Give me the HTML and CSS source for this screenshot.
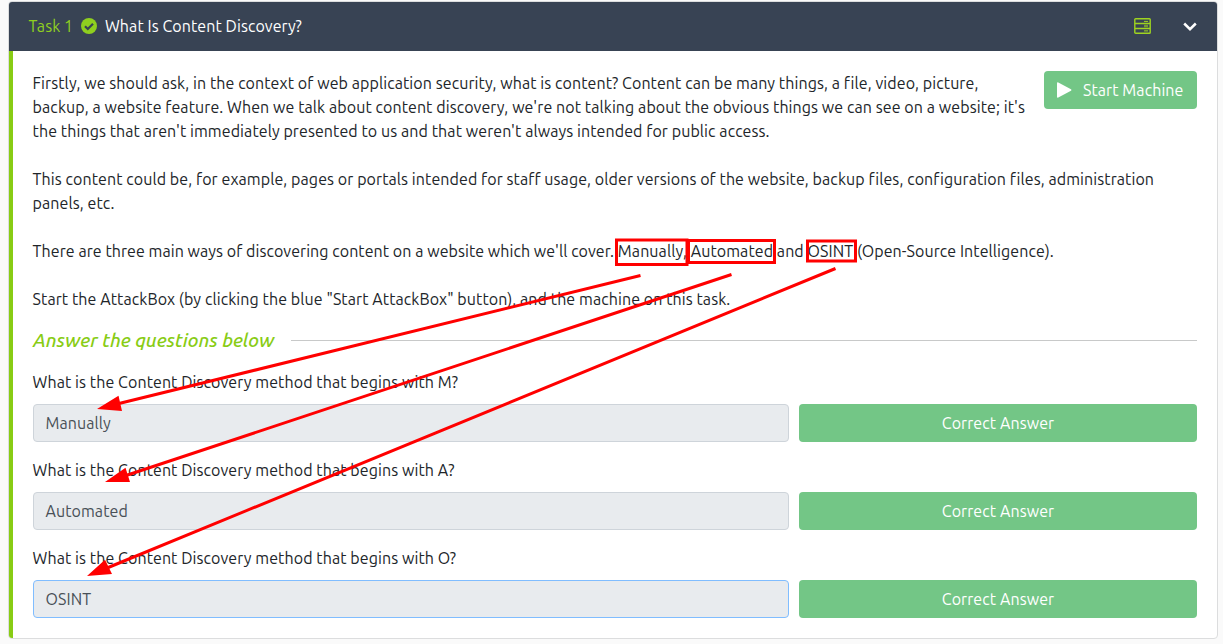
FILE: index.html
```html
<!DOCTYPE html>
<html lang="en">
<head>
<meta charset="utf-8">
<title>Content Discovery</title>
<link rel="stylesheet" href="styles.css">
</head>
<body>
<main class="card">
  <header class="card-header">
    <span class="task">Task 1</span>
    <svg class="check" viewBox="0 0 16 16"><circle cx="8" cy="8" r="8" fill="#8fcf1f"/><path d="M4 8.2l2.8 2.8L12 5.7" fill="none" stroke="#384354" stroke-width="2.2"/></svg>
    <span class="title">What Is Content Discovery?</span>
    <svg class="server" viewBox="0 0 17 16"><g fill="none" stroke="#9fd420" stroke-width="1.4"><rect x=".8" y=".8" width="15.4" height="14.4" rx=".8"/><path d="M1 5.5h15M1 10.5h15" stroke-width="1.5"/><path d="M10 3.4h4M10 12.900h4" stroke-width="1"/><path d="M10 8h4" stroke-width="2.4" opacity=".6"/></g></svg>
    <svg class="chevron" viewBox="0 0 14 9"><path d="M1.2 1.500L7 7.2l5.800-5.700" fill="none" stroke="#fff" stroke-width="2.500"/></svg>
  </header>
  <div class="card-body">
    <section class="intro">
      <button class="start"><svg class="play" viewBox="0 0 15 16"><path d="M0 1.2Q0 0 1.3.5L14 7.3q1 .7 0 1.4L1.3 15.5Q0 16 0 14.8z" fill="#fff"/></svg><span class="start-label">Start Machine</span></button>
      <p class="para"><span class="line">Firstly, we should ask, in the context of web application security, what is content? Content can be many things, a file, video, picture,</span><span class="line">backup, a website feature. When we talk about content discovery, we're not talking about the obvious things we can see on a website; it's</span><span class="line">the things that aren't immediately presented to us and that weren't always intended for public access.</span></p>
      <p class="para"><span class="line">This content could be, for example, pages or portals intended for staff usage, older versions of the website, backup files, configuration files, administration</span><span class="line">panels, etc.</span></p>
      <p class="para"><span class="line"><span class="lead">There are three main ways of discovering content on a website which we'll cover. </span>Manually, Automated and OSINT (Open-Source Intelligence).</span></p>
      <p class="para"><span class="line">Start the AttackBox (by clicking the blue "Start AttackBox" button), and the machine on this task.</span></p>
    </section>
    <div class="divider"><h2 class="heading">Answer the questions below</h2><span class="rule"></span></div>
    <section class="question">
      <label class="ask">What is the Content Discovery method that begins with M?</label>
      <div class="row"><div class="field">Manually</div><div class="correct"><span>Correct Answer</span></div></div>
    </section>
    <section class="question">
      <label class="ask">What is the Content Discovery method that begins with A?</label>
      <div class="row"><div class="field">Automated</div><div class="correct"><span>Correct Answer</span></div></div>
    </section>
    <section class="question">
      <label class="ask">What is the Content Discovery method that begins with O?</label>
      <div class="row"><div class="field focused">OSINT</div><div class="correct"><span>Correct Answer</span></div></div>
    </section>
  </div>
</main>
<svg class="annotations" viewBox="0 0 1223 644">
  <g fill="none" stroke="#f00" stroke-width="3">
    <rect x="616.5" y="240" width="70.5" height="24.5"/>
    <rect x="688.5" y="240.5" width="86" height="22"/>
    <rect x="807.5" y="241" width="48" height="20"/>
    <path d="M640.5 275.5L119 403.5M731.5 274.5L126 475.5M835.5 268.5L107 568"/>
  </g>
  <path fill="#f00" d="M97 409l21.500-13.300 3.500 15.300zM105 482l20.500-14.300 4.500 14.300zM87 576l18-16.300 7 14.300z"/>
</svg>
</body>
</html>
```
FILE: styles.css
```css
* { box-sizing: border-box; }
body {
  margin: 0;
  height: 644px;
  padding: 1px 5px 0 8px;
  overflow: hidden;
  background: #fafafa;
  color: #212529;
  font: 16px/24px Ubuntu, "Noto Sans", sans-serif;
  letter-spacing: .082px;
}
.card {
  width: 1210px;
  height: 638px;
  border: 1px solid #dcddde;
  border-radius: 4px;
  background: #fff;
  overflow: hidden;
}
.card-header {
  display: flex;
  align-items: center;
  height: 49px;
  padding: 0 20px 1px 19.5px;
  background: #384354;
  color: #fff;
  white-space: nowrap;
}
.task { width: 52.5px; color: #8fcf1f; }
.check { width: 16px; height: 16px; margin-right: 8px; }
.server { width: 17px; height: 16px; margin-left: auto; margin-right: 32px; }
.chevron { width: 14px; height: 9px; }
.card-body {
  height: 588px;
  padding: 20px 20px 0;
  border-left: 4px solid #88cc14;
}
.intro { height: 240px; }
.para { margin: 0 0 24px; }
.line { display: block; white-space: nowrap; width: max-content; text-indent: -.4px; }
.lead { letter-spacing: .06px; }
.start {
  float: right;
  display: flex;
  align-items: center;
  width: 153px;
  height: 38px;
  padding: 0 0 0 13px;
  border: 0;
  border-radius: 4px;
  background: #73c686;
  color: #fff;
  font: inherit;
  letter-spacing: inherit;
}
.play { width: 15px; height: 16px; margin-right: 11px; }
.start-label { white-space: nowrap; }
.divider { display: flex; align-items: center; height: 59px; gap: 16px; }
.heading {
  width: 242px;
  margin: 0;
  padding-bottom: 2px;
  color: #88cc14;
  font-size: 19.2px;
  font-style: italic;
  font-weight: 500;
  letter-spacing: -.02px;
  white-space: nowrap;
}
.rule { flex: 1; height: 1px; background: #c8c9c9; }
.question { height: 88px; }
.ask { display: block; height: 34px; white-space: nowrap; width: max-content; text-indent: -.4px; }
.row { display: grid; grid-template-columns: 756px 398px; gap: 10px; height: 38px; }
.field {
  padding: 6px 11.5px;
  border: 1px solid #ced4da;
  border-radius: 4px;
  background: #e8ebee;
  color: #495057;
}
.focused { border-color: #80bdff; }
.correct {
  display: flex;
  align-items: center;
  justify-content: center;
  border-radius: 4px;
  background: #73c686;
  color: #fff;
}
.annotations { position: absolute; left: 0; top: 0; width: 1223px; height: 644px; pointer-events: none; }
```
